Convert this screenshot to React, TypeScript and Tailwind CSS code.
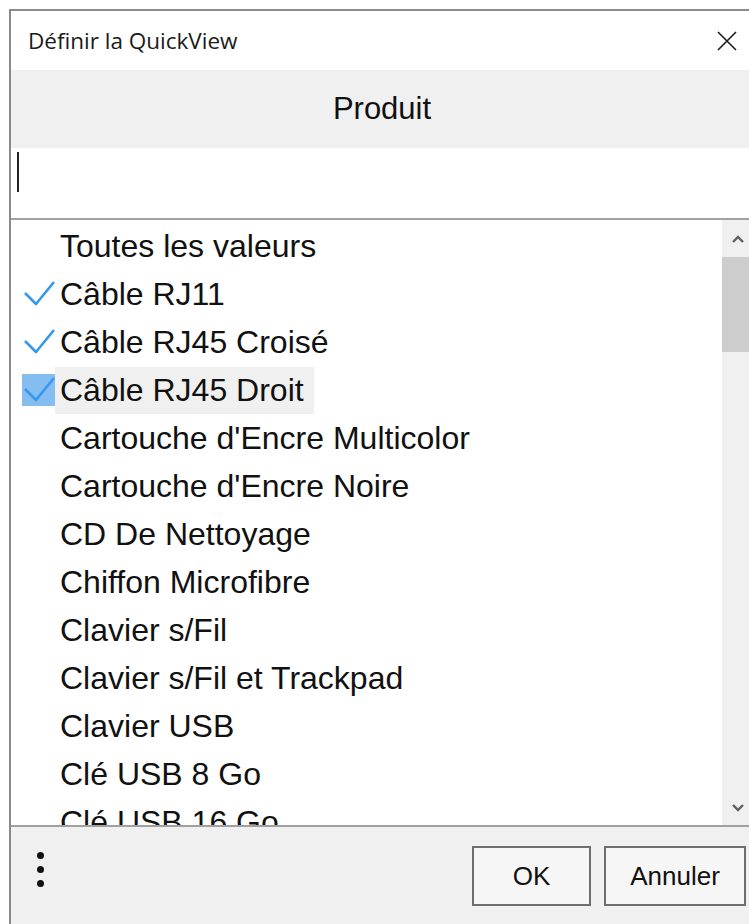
import React from 'react';

const products = [
  'Toutes les valeurs',
  'Câble RJ11',
  'Câble RJ45 Croisé',
  'Câble RJ45 Droit',
  "Cartouche d'Encre Multicolor",
  "Cartouche d'Encre Noire",
  'CD De Nettoyage',
  'Chiffon Microfibre',
  'Clavier s/Fil',
  'Clavier s/Fil et Trackpad',
  'Clavier USB',
  'Clé USB 8 Go',
  'Clé USB 16 Go',
];

const checked = new Set(['Câble RJ11', 'Câble RJ45 Croisé', 'Câble RJ45 Droit']);
const current = 'Câble RJ45 Droit';

const CheckMark: React.FC = () => (
  <svg width="33" height="32" viewBox="0 0 33 32" className="block">
    <path d="M3 15 L14 26 L32 4" fill="none" stroke="#3597f0" strokeWidth="2.6" strokeLinejoin="round" />
  </svg>
);

export default function App() {
  return (
    <div className="h-[924px] w-[749px] overflow-hidden bg-white pl-[9px] pt-[9px]">
      <div
        className="flex h-[930px] w-[744px] flex-col border-l-2 border-t-2 border-[#8a8a8a]"
        style={{ fontFamily: '"Liberation Sans", Arial, sans-serif' }}
      >
        {/* Title bar */}
        <div className="flex h-[59px] shrink-0 items-center justify-between bg-white pl-[17px] pr-[15px]">
          <span
            className="text-[22.5px] text-[#1a1a1a]"
            style={{ fontFamily: '"Open Sans", "Noto Sans", sans-serif' }}
          >
            Définir la QuickView
          </span>
          <svg width="22" height="22" viewBox="0 0 22 22">
            <path d="M2 2 L20 20 M20 2 L2 20" stroke="#1a1a1a" strokeWidth="1.6" />
          </svg>
        </div>

        {/* Column header */}
        <div className="flex h-[78px] shrink-0 items-center justify-center bg-[#f0f0f0] text-[31px] text-[#111]">
          Produit
        </div>

        {/* Search box */}
        <div className="h-[70px] shrink-0 bg-white pl-[6px] pt-[4px]">
          <div className="h-[40px] w-[2px] bg-[#222]" />
        </div>

        {/* Value list */}
        <div className="flex h-[609px] shrink-0 border-y-2 border-[#a0a0a0] bg-white">
          <div className="flex-1 overflow-hidden pt-[2px]">
            {products.map((p) => (
              <div key={p} className="flex h-[48px] items-center pl-[11px]">
                <div
                  className={
                    p === current
                      ? 'flex h-[32px] w-[33px] items-center justify-center bg-[#86bdf0]'
                      : 'flex h-[32px] w-[33px] items-center justify-center'
                  }
                >
                  {checked.has(p) && <CheckMark />}
                </div>
                <span
                  className={
                    p === current
                      ? 'flex h-[47px] items-center bg-[#f0f0f0] pl-[5px] pr-[10px] text-[32px] whitespace-nowrap text-[#111]'
                      : 'pl-[5px] text-[32px] whitespace-nowrap text-[#111]'
                  }
                >
                  {p}
                </span>
              </div>
            ))}
          </div>

          {/* Scrollbar */}
          <div className="flex w-[31px] flex-col bg-[#f0f0f0]">
            <div className="flex h-[37px] items-center justify-center">
              <svg width="14" height="10" viewBox="0 0 14 10">
                <path d="M2 8 L7 3 L12 8" fill="none" stroke="#606060" strokeWidth="2.4" />
              </svg>
            </div>
            <div className="h-[95px] bg-[#cdcdcd]" />
            <div className="flex-1" />
            <div className="flex h-[35px] items-center justify-center">
              <svg width="14" height="10" viewBox="0 0 14 10">
                <path d="M2 2 L7 7 L12 2" fill="none" stroke="#606060" strokeWidth="2.4" />
              </svg>
            </div>
          </div>
        </div>

        {/* Footer */}
        <div className="flex flex-1 items-start justify-between bg-[#f0f0f0] pl-[26px] pr-[7px] pt-[19px]">
          <div className="flex flex-col gap-[7px] pt-[6px]">
            <div className="h-[7px] w-[7px] rounded-full bg-[#111]" />
            <div className="h-[7px] w-[7px] rounded-full bg-[#111]" />
            <div className="h-[7px] w-[7px] rounded-full bg-[#111]" />
          </div>
          <div className="flex gap-[13px]">
            <button className="h-[60px] w-[119px] border-2 border-[#6e6e6e] bg-[#f6f6f6] text-[26px] text-[#111]">
              OK
            </button>
            <button className="h-[60px] w-[142px] border-2 border-[#6e6e6e] bg-[#f6f6f6] text-[26px] text-[#111]">
              Annuler
            </button>
          </div>
        </div>
      </div>
    </div>
  );
}
